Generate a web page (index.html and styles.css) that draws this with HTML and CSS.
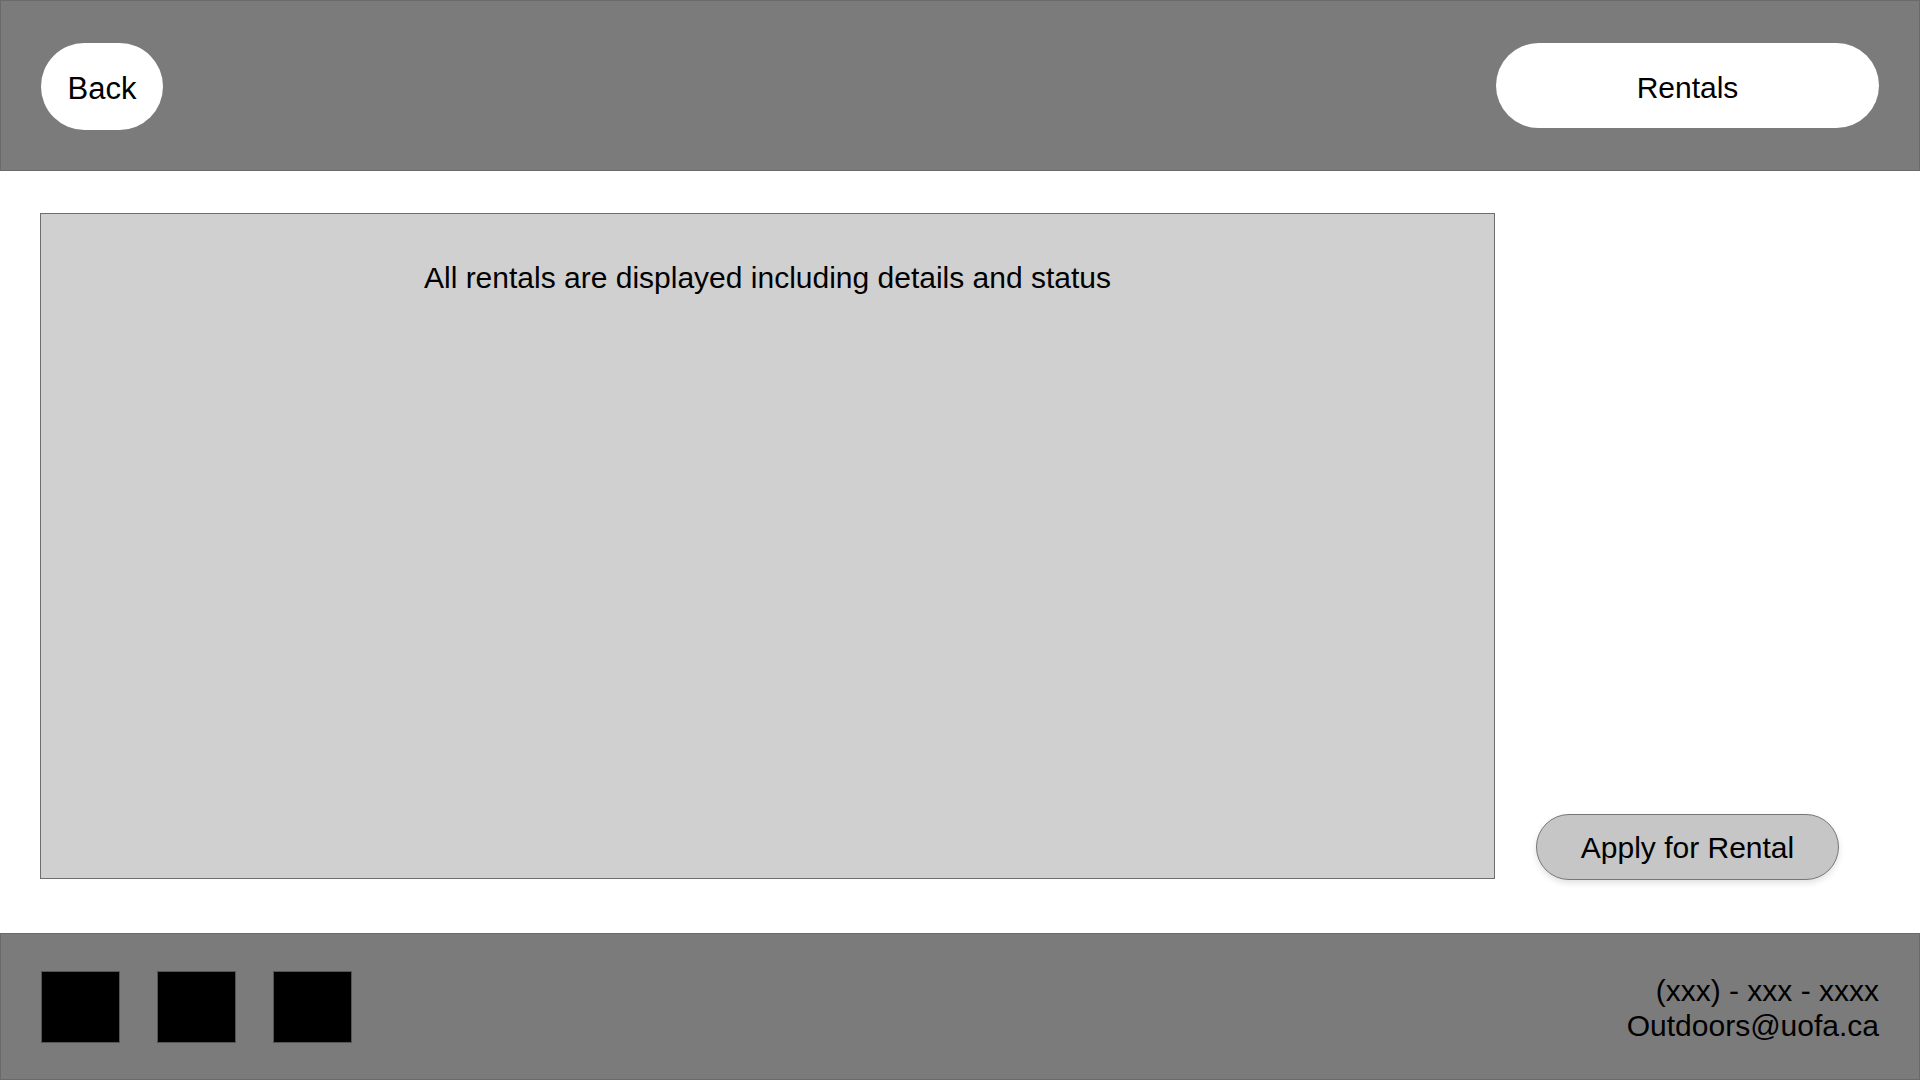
FILE: index.html
```html
<!DOCTYPE html>
<html lang="en">
<head>
<meta charset="utf-8">
<title>Rentals</title>
<link rel="stylesheet" href="styles.css">
</head>
<body>
<div class="page">
  <header class="topbar">
    <button class="pill back">Back</button>
    <button class="pill rentals">Rentals</button>
  </header>
  <main class="main">
    <section class="listing">
      <p class="listing-text">All rentals are displayed including details and status</p>
    </section>
    <aside class="side">
      <button class="apply">Apply for Rental</button>
    </aside>
  </main>
  <footer class="bottombar">
    <div class="socials">
      <span class="square"></span>
      <span class="square"></span>
      <span class="square"></span>
    </div>
    <div class="contact">
      <div>(xxx) - xxx - xxxx</div>
      <div>Outdoors@uofa.ca</div>
    </div>
  </footer>
</div>
</body>
</html>
```
FILE: styles.css
```css
* { box-sizing: border-box; }
html, body { margin: 0; padding: 0; }
body {
  font-family: "Liberation Sans", Arial, sans-serif;
  color: #000;
  background: #fff;
}
.page {
  width: 1920px;
  height: 1080px;
  display: flex;
  flex-direction: column;
}
.topbar {
  height: 171px;
  flex: none;
  background: #7b7b7b;
  border: 1px solid #6a6a6a;
  padding: 0 40px;
  display: flex;
  align-items: center;
  justify-content: space-between;
}
.pill {
  font-family: inherit;
  font-size: 30px;
  color: #000;
  background: #fff;
  border: none;
  padding: 4px 0 0 0;
  cursor: pointer;
}
.back {
  width: 122px;
  height: 87px;
  border-radius: 44px;
  font-size: 31px;
  margin-top: 2px;
}
.rentals {
  width: 383px;
  height: 85px;
  border-radius: 43px;
}
.main {
  flex: 1;
  display: flex;
  padding: 42px 0 54px 40px;
}
.listing {
  width: 1455px;
  flex: none;
  background: #d0d0d0;
  border: 1px solid #6e6e6e;
  padding-top: 47px;
}
.listing-text {
  margin: 0;
  text-align: center;
  font-size: 30px;
  line-height: 34px;
}
.side {
  flex: 1;
  display: flex;
  justify-content: center;
  align-items: flex-end;
  padding-right: 40px;
}
.apply {
  width: 303px;
  height: 66px;
  border-radius: 33px;
  background: #c6c6c6;
  border: 1px solid #777;
  box-shadow: 0 3px 6px rgba(0,0,0,0.12);
  font-family: inherit;
  font-size: 30px;
  color: #000;
  padding: 2px 0 0 0;
  margin-bottom: -1px;
}
.bottombar {
  height: 147px;
  flex: none;
  background: #7b7b7b;
  border: 1px solid #6a6a6a;
  padding: 0 40px;
  display: flex;
  align-items: center;
  justify-content: space-between;
}
.socials {
  display: flex;
  gap: 37px;
}
.square {
  display: block;
  width: 79px;
  height: 72px;
  background: #000;
  border: 1px solid #555;
}
.contact {
  text-align: right;
  font-size: 30px;
  line-height: 35px;
  padding-top: 3px;
}
```
